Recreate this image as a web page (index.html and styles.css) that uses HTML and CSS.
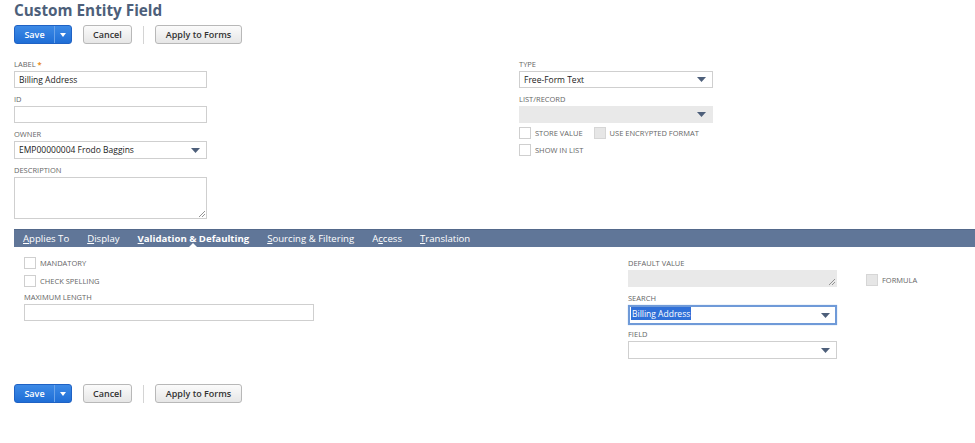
FILE: index.html
```html
<!DOCTYPE html>
<html>
<head>
<meta charset="utf-8">
<link rel="stylesheet" href="styles.css">
</head>
<body>
<div class="page">
  <h1 class="title">Custom Entity Field</h1>
  <div class="btnbar">
    <div class="save"><span class="save-main">Save</span><span class="save-arrow"><svg width="6" height="4" viewBox="0 0 6 4"><path d="M0 0h6L3 4z" fill="#fff"/></svg></span></div>
    <button class="btn">Cancel</button>
    <span class="sep"></span>
    <button class="btn">Apply to Forms</button>
  </div>

  <div class="topform">
    <div class="col">
      <div class="field">
        <div class="lbl">LABEL <span class="req">*</span></div>
        <div class="input">Billing Address</div>
      </div>
      <div class="field">
        <div class="lbl">ID</div>
        <div class="input"></div>
      </div>
      <div class="field">
        <div class="lbl">OWNER</div>
        <div class="input select">EMP00000004 Frodo Baggins<svg class="caret" width="9" height="5" viewBox="0 0 9 5"><path d="M0 0h9L4.5 5z"/></svg></div>
      </div>
      <div class="field">
        <div class="lbl">DESCRIPTION</div>
        <div class="input textarea"><svg class="grip" width="7" height="7" viewBox="0 0 7 7"><path d="M1 7L7 1M4 7L7 4" stroke="#888" stroke-width="0.9"/></svg></div>
      </div>
    </div>
    <div class="col col-right">
      <div class="field">
        <div class="lbl">TYPE</div>
        <div class="input select">Free-Form Text<svg class="caret" width="9" height="5" viewBox="0 0 9 5"><path d="M0 0h9L4.5 5z"/></svg></div>
      </div>
      <div class="field tight">
        <div class="lbl">LIST/RECORD</div>
        <div class="input select disabled"><svg class="caret" width="9" height="5" viewBox="0 0 9 5"><path d="M0 0h9L4.5 5z"/></svg></div>
      </div>
      <div class="checkrow">
        <label class="chk"><span class="box"></span>STORE VALUE</label>
        <label class="chk"><span class="box dis"></span>USE ENCRYPTED FORMAT</label>
      </div>
      <div class="checkrow">
        <label class="chk"><span class="box"></span>SHOW IN LIST</label>
      </div>
    </div>
  </div>

  <div class="tabs">
    <span class="tab"><u>A</u>pplies To</span>
    <span class="tab"><u>D</u>isplay</span>
    <span class="tab active"><u>V</u>alidation &amp; Defaulting</span>
    <span class="tab"><u>S</u>ourcing &amp; Filtering</span>
    <span class="tab">A<u>c</u>cess</span>
    <span class="tab"><u>T</u>ranslation</span>
  </div>

  <div class="tabbody">
    <div class="tcol-left">
      <div class="checkrow first">
        <label class="chk"><span class="box"></span>MANDATORY</label>
      </div>
      <div class="checkrow">
        <label class="chk"><span class="box"></span>CHECK SPELLING</label>
      </div>
      <div class="field">
        <div class="lbl">MAXIMUM LENGTH</div>
        <div class="input wide"></div>
      </div>
    </div>
    <div class="tcol-mid">
      <div class="field">
        <div class="lbl">DEFAULT VALUE</div>
        <div class="input textarea short disabled"><svg class="grip" width="7" height="7" viewBox="0 0 7 7"><path d="M1 7L7 1M4 7L7 4" stroke="#888" stroke-width="0.9"/></svg></div>
      </div>
      <div class="field after-focus">
        <div class="lbl">SEARCH</div>
        <div class="input select focus"><span class="hl">Billing Address</span><svg class="caret" width="9" height="5" viewBox="0 0 9 5"><path d="M0 0h9L4.5 5z"/></svg></div>
      </div>
      <div class="field">
        <div class="lbl">FIELD</div>
        <div class="input select"><svg class="caret" width="9" height="5" viewBox="0 0 9 5"><path d="M0 0h9L4.5 5z"/></svg></div>
      </div>
    </div>
    <div class="tcol-right">
      <label class="chk"><span class="box dis"></span>FORMULA</label>
    </div>
  </div>

  <div class="btnbar bottom">
    <div class="save"><span class="save-main">Save</span><span class="save-arrow"><svg width="6" height="4" viewBox="0 0 6 4"><path d="M0 0h6L3 4z" fill="#fff"/></svg></span></div>
    <button class="btn">Cancel</button>
    <span class="sep"></span>
    <button class="btn">Apply to Forms</button>
  </div>
</div>
</body>
</html>
```

FILE: styles.css
```css
* { box-sizing: border-box; }
html, body { margin: 0; padding: 0; background: #fff; }
body { font-family: "Open Sans", "Liberation Sans", sans-serif; color: #333; }
.page { padding-left: 14px; }

.title {
  margin: 0;
  padding-top: 0;
  font-size: 15.3px;
  line-height: 21px;
  font-weight: 700;
  color: #4d5f7a;
  height: 25px;
}

.btnbar { display: flex; align-items: center; height: 19px; }
.btnbar.bottom { margin-top: 19px; }

.save {
  display: flex;
  height: 19px;
  width: 58px;
  border: 1px solid #1f62c4;
  border-radius: 3px;
  background: linear-gradient(#3d8ae6, #1f6ed6);
  color: #fff;
  font-size: 9px;
  font-weight: 600;
  overflow: hidden;
}
.save-main { width: 39px; display: flex; align-items: center; justify-content: center; }
.save-arrow {
  flex: 1;
  display: flex; align-items: center; justify-content: center;
  border-left: 1px solid #6aa3ea;
}

.btn {
  height: 19px;
  margin: 0 0 0 11px;
  padding: 0 9px;
  border: 1px solid #b8b8b8;
  border-radius: 3px;
  background: linear-gradient(#fbfbfb, #e6e6e6);
  font-family: "Open Sans", "Liberation Sans", sans-serif;
  font-size: 9px;
  font-weight: 600;
  color: #333;
  line-height: 17px;
}
.btn:last-child { padding: 0 10px; }
.sep { width: 1px; height: 18px; background: #d4d4d4; margin-left: 11px; }

.topform {
  display: grid;
  grid-template-columns: 505px 194px;
  margin-top: 15px;
}
.col { width: 193px; }
.col-right { width: 194px; }

.field { margin-bottom: 6px; }
.lbl {
  font-size: 7.5px;
  line-height: 10px;
  color: #666;
  margin-bottom: 2px;
}
.req { color: #e88a1a; font-weight: 700; }

.input {
  position: relative;
  height: 17px;
  border: 1px solid #cfcfcf;
  background: #fff;
  font-size: 8.5px;
  line-height: 15px;
  padding: 0 4px;
  color: #222;
  white-space: nowrap;
}
.input.select { height: 18px; line-height: 16px; }
.col-right .input.select { height: 17px; line-height: 15px; }
.input.textarea { height: 42px; }
.input.textarea.short { height: 17px; }
.input.disabled { background: #e9e9e9; border-color: #e9e9e9; }
.input.wide { width: 290px; }
.caret { position: absolute; right: 6px; top: 6px; fill: #4d5f7a; }
.col-right .caret { top: 5px; }
.grip { position: absolute; right: 1px; bottom: 1px; }

.input.focus { border: 2px solid #6f9ad8; line-height: 14px; height: 20px; padding-left: 1px; box-shadow: 0 0 1px #9bbbe8; }
.input.focus .caret { top: 6px; right: 5px; }
.hl { background: #3070d8; color: #fff; padding: 1px 1px; }
.field.after-focus { margin-bottom: 4px; }

.field.tight { margin-bottom: 4px; }

.checkrow { display: flex; gap: 11px; height: 12px; margin-bottom: 5px; align-items: center; }
.chk {
  display: flex; align-items: center;
  font-size: 7.5px;
  color: #666;
  white-space: nowrap;
}
.box {
  width: 12px; height: 12px;
  border: 1px solid #cfcfcf;
  background: #fff;
  margin-right: 4px;
  flex: none;
}
.box.dis { background: #e6e6e6; border-color: #d6d6d6; }

.tabs {
  margin-top: 4px;
  height: 18px;
  background: #607698;
  display: flex;
  align-items: center;
  border-top: 1px solid #53698b;
}
.tab {
  position: relative;
  color: #fff;
  font-size: 9.6px;
  padding: 0 9px;
  line-height: 17px;
  white-space: nowrap;
}
.tab.active { font-weight: 700; }
.tab.active::after {
  content: "";
  position: absolute;
  left: 50%;
  bottom: 0;
  margin-left: -4px;
  border-left: 4px solid transparent;
  border-right: 4px solid transparent;
  border-bottom: 4px solid #fff;
}

.tabbody {
  display: flex;
  padding-left: 10px;
  padding-top: 10px;
}
.tcol-left { width: 604px; }
.tcol-mid { width: 209px; padding-top: 1px; }
.tcol-right { padding-left: 29px; padding-top: 17px; }
.checkrow.first { margin-bottom: 6px; }
```
